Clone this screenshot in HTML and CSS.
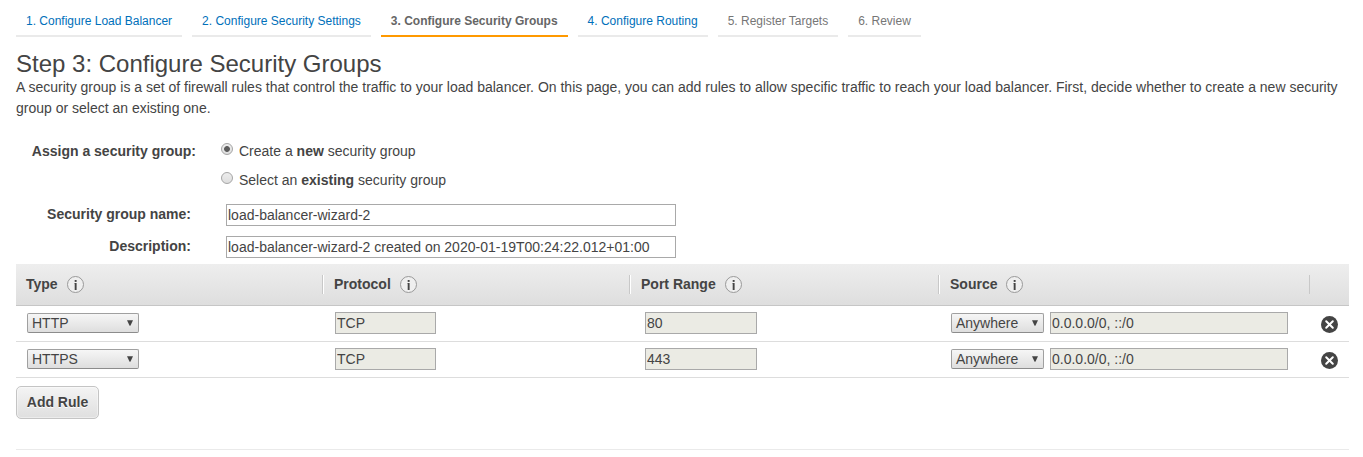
FILE: index.html
```html
<!DOCTYPE html>
<html lang="en">
<head>
<meta charset="utf-8">
<title>Configure Security Groups</title>
<link rel="stylesheet" href="styles.css">
</head>
<body>
<svg class="defs" width="0" height="0" aria-hidden="true">
  <symbol id="info" viewBox="0 0 17 17">
    <circle cx="8.5" cy="8.5" r="8" fill="#efefef" stroke="#999" stroke-width="1"/>
    <rect x="7.7" y="4" width="1.9" height="1.9" fill="#444"/>
    <path d="M7.3 7h2.3v7H7.7V7.6H7.3z" fill="#444"/>
  </symbol>
  <symbol id="remove" viewBox="0 0 17 17">
    <circle cx="8.5" cy="8.5" r="8.5" fill="#444"/>
    <path d="M5.2 5.2l6.6 6.6M11.8 5.2l-6.6 6.6" stroke="#fff" stroke-width="2" stroke-linecap="round"/>
  </symbol>
  <symbol id="arrow" viewBox="0 0 6 6">
    <path d="M0 .2h6L3.4 5.8H2.6z" fill="#444"/>
  </symbol>
</svg>
<nav class="steps">
  <a class="step">1. Configure Load Balancer</a>
  <a class="step">2. Configure Security Settings</a>
  <a class="step step-active">3. Configure Security Groups</a>
  <a class="step">4. Configure Routing</a>
  <a class="step step-disabled">5. Register Targets</a>
  <a class="step step-disabled">6. Review</a>
</nav>
<main class="page">
  <h1 class="title">Step 3: Configure Security Groups</h1>
  <p class="intro">A security group is a set of firewall rules that control the traffic to your load balancer. On this page, you can add rules to allow specific traffic to reach your load balancer. First, decide whether to create a new security group or select an existing one.</p>
  <div class="assign">
    <span class="assign-label">Assign a security group:</span>
    <div class="choices">
      <label class="choice"><span class="radio radio-on"></span><span>Create a <b>new</b> security group</span></label>
      <label class="choice"><span class="radio"></span><span>Select an <b>existing</b> security group</span></label>
    </div>
  </div>
  <div class="fields">
    <label class="field"><span class="field-label">Security group name:</span><input class="box" value="load-balancer-wizard-2"></label>
    <label class="field"><span class="field-label">Description:</span><input class="box" value="load-balancer-wizard-2 created on 2020-01-19T00:24:22.012+01:00"></label>
  </div>
  <section class="rules">
    <div class="row head">
      <div class="th"><span>Type</span><svg class="info"><use href="#info"/></svg></div>
      <div class="th"><span>Protocol</span><svg class="info"><use href="#info"/></svg></div>
      <div class="th"><span>Port Range</span><svg class="info"><use href="#info"/></svg></div>
      <div class="th th-source"><span>Source</span><svg class="info"><use href="#info"/></svg></div>
      <div></div>
    </div>
    <div class="row">
      <div class="td"><div class="select select-type"><span>HTTP</span><svg class="arrow"><use href="#arrow"/></svg></div></div>
      <div class="td"><input class="box box-off protocol" value="TCP" readonly></div>
      <div class="td td-port"><input class="box box-off port" value="80" readonly></div>
      <div class="td"><div class="select select-source"><span>Anywhere</span><svg class="arrow"><use href="#arrow"/></svg></div><input class="box box-off cidr" value="0.0.0.0/0, ::/0" readonly></div>
      <div class="td"><svg class="remove"><use href="#remove"/></svg></div>
    </div>
    <div class="row">
      <div class="td"><div class="select select-type"><span>HTTPS</span><svg class="arrow"><use href="#arrow"/></svg></div></div>
      <div class="td"><input class="box box-off protocol" value="TCP" readonly></div>
      <div class="td td-port"><input class="box box-off port" value="443" readonly></div>
      <div class="td"><div class="select select-source"><span>Anywhere</span><svg class="arrow"><use href="#arrow"/></svg></div><input class="box box-off cidr" value="0.0.0.0/0, ::/0" readonly></div>
      <div class="td"><svg class="remove"><use href="#remove"/></svg></div>
    </div>
  </section>
  <button class="add">Add Rule</button>
  <hr class="rule">
</main>
</body>
</html>
```
FILE: styles.css
```css
* { box-sizing: border-box; }
body {
  margin: 0;
  padding: 0 14px 0 16px;
  background: #fff;
  color: #444;
  font: 14px/21px "Liberation Sans", Arial, sans-serif;
  overflow: hidden;
}
.defs { display: block; }
.steps {
  display: flex;
  gap: 10px;
  height: 37px;
  padding-top: 11px;
  font-size: 12px;
}
.step {
  padding: 0 10px;
  border-bottom: 2px solid #eaeaea;
  color: #0070ba;
  white-space: nowrap;
}
.step-active { border-color: #ff9900; color: #666; font-weight: bold; }
.step-disabled { color: #767676; }
.title {
  margin: 13px 0 0;
  font-size: 24px;
  line-height: 27px;
  font-weight: normal;
}
.intro { margin: 0; width: 1333px; }
.assign { display: flex; padding-top: 22px; }
.assign-label { width: 180px; text-align: right; font-weight: bold; }
.choices { display: grid; row-gap: 8px; padding-left: 25px; }
.choice { display: flex; gap: 6px; }
.radio {
  width: 12px;
  height: 12px;
  margin-top: 2px;
  border: 1px solid #a5a5a5;
  border-radius: 50%;
  background: linear-gradient(#ededed, #dedede);
}
.radio-on { background: radial-gradient(circle, #5c5c5c 0 2.5px, transparent 3.3px), linear-gradient(#ededed, #dedede); }
.fields { display: grid; row-gap: 10px; padding: 13px 0 6px; }
.field { display: flex; height: 22px; }
.field-label { width: 175px; margin-right: 35px; line-height: 21px; text-align: right; font-weight: bold; }
.box {
  width: 450px;
  height: 22px;
  padding: 1px;
  border: 1px solid #a9a9a9;
  border-radius: 0;
  background: #fff;
  color: #444;
  font: 14px "Liberation Sans", Arial, sans-serif;
  outline: 0;
}
.box-off { background: #ebebe4; }
.protocol { width: 101px; }
.port { width: 112px; }
.cidr { width: 238px; }
.rules { width: 1333px; }
.row {
  display: grid;
  grid-template-columns: 308px 307px 309px 370px 39px;
  height: 36px;
  border-bottom: 1px solid #ddd;
}
.head {
  height: 42px;
  border-color: #c6c6c6;
  background: linear-gradient(#eee, #dedede);
  font-weight: bold;
}
.th {
  display: flex;
  gap: 9px;
  height: 19px;
  margin-top: 11px;
  padding-left: 10px;
  line-height: 19px;
  border-right: 1px solid #fff;
  box-shadow: inset -1px 0 #c8c8c8;
}
.th-source { border-color: #c8c8c8; box-shadow: none; }
.info { width: 17px; height: 17px; margin-top: 1px; }
.td { display: flex; gap: 6px; align-items: flex-start; padding: 6px 0 0 11px; }
.td-port { padding-left: 14px; }
.select {
  display: flex;
  justify-content: space-between;
  height: 20px;
  margin-top: 1px;
  padding: 0 5px 0 4px;
  border: 1px solid #a0a0a0;
  border-bottom-color: #8c8c8c;
  border-radius: 2px;
  background: linear-gradient(#f6f6f6, #dedede);
  line-height: 18px;
}
.select-type { width: 112px; }
.select-source { width: 93px; }
.arrow { width: 6px; height: 6px; margin-top: 6px; }
.remove { width: 17px; height: 17px; margin-top: 4px; }
.add {
  display: block;
  width: 83px;
  height: 33px;
  margin-top: 8px;
  padding: 0 0 2px;
  border: 1px solid #c4c4c4;
  border-radius: 5px;
  background: linear-gradient(#f4f4f4, #dfdfdf);
  box-shadow: inset 0 0 0 1px rgba(255, 255, 255, .4);
  color: #444;
  font: bold 14px "Liberation Sans", Arial, sans-serif;
  text-shadow: 0 1px #fff;
}
.rule { width: 1333px; margin: 30px 0 0; border: 0; border-top: 1px solid #eaeaea; }
```
